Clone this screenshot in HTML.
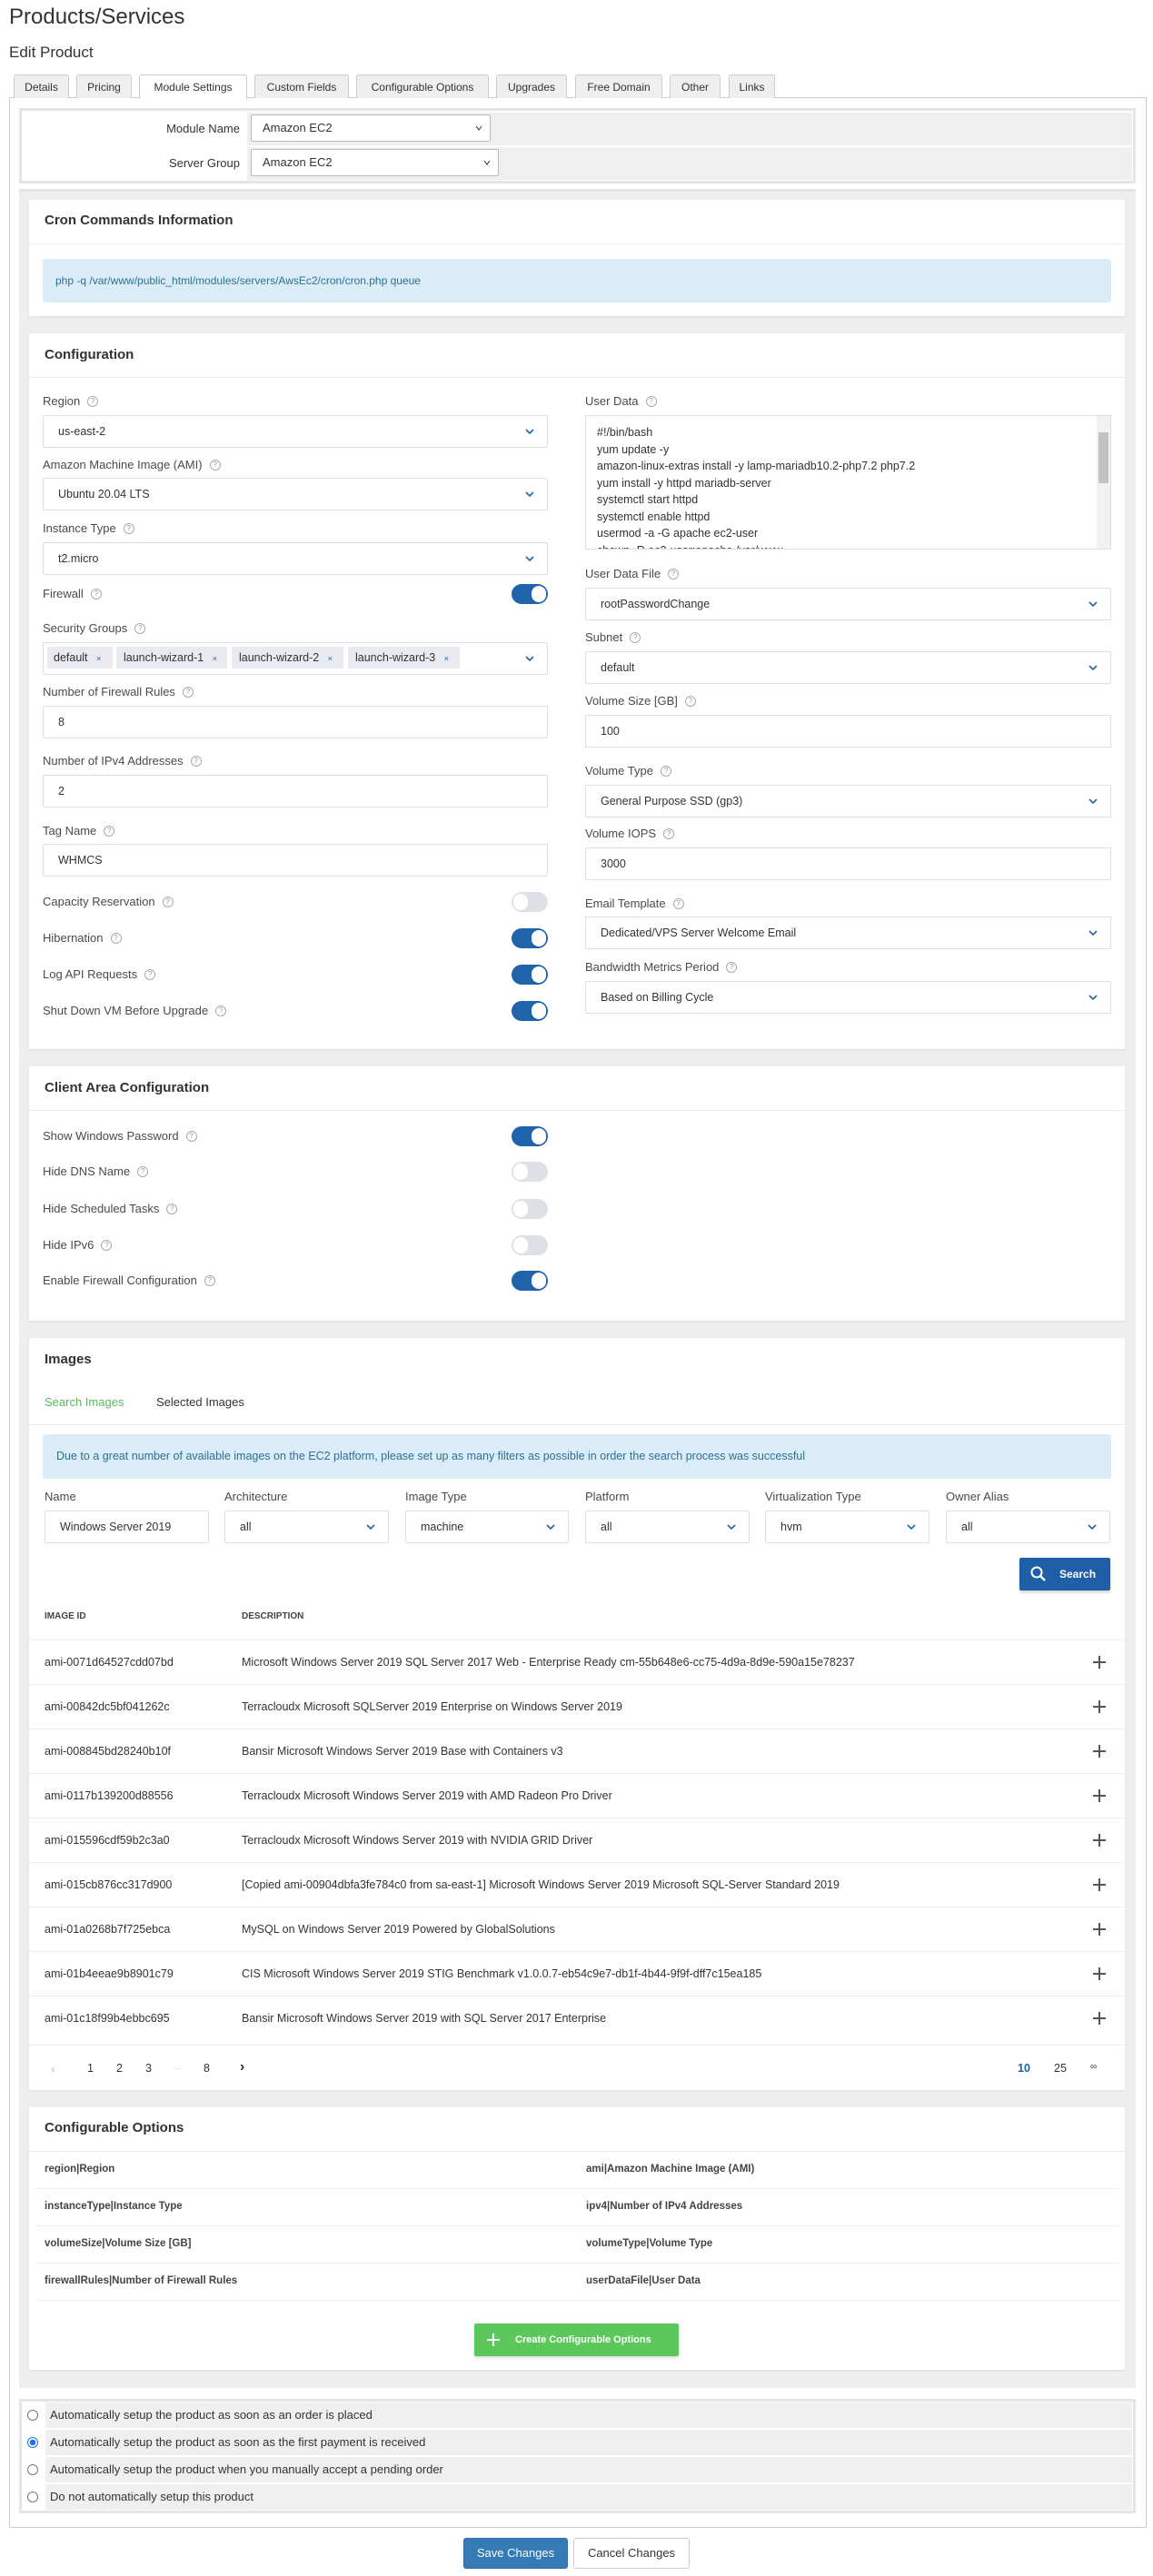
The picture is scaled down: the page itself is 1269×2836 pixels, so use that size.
<!DOCTYPE html>
<html><head><meta charset="utf-8">
<style>
*{box-sizing:border-box}
body{margin:0;width:1269px;height:2836px;position:relative;background:#fff;font-family:"Liberation Sans",Arial,sans-serif;color:#333;overflow:hidden}
.a{position:absolute}
.lbl{position:absolute;font-size:13px;color:#4a4a4a;height:16px;line-height:16px;white-space:nowrap}
.q{display:inline-block;width:12px;height:12px;border:1px solid #aaa;border-radius:50%;font-size:8px;line-height:10px;text-align:center;color:#999;margin-left:8px;vertical-align:middle;position:relative;top:-1px}
.sel{position:absolute;border:1px solid #dcdfe6;background:#fff;height:36px;font-size:12.5px;padding-left:16px;line-height:34px;color:#333;border-radius:2px}
.sel svg{position:absolute;right:14px;top:14px}
.tg{position:absolute;width:40px;height:22px;border-radius:11px;background:#1f63ab}
.tg:after{content:"";position:absolute;right:2px;top:2px;width:16px;height:18px;border-radius:9px;background:#fff}
.tg.off{background:#dde0e7}
.tg.off:after{left:2px;right:auto}
.card{position:absolute;left:32px;width:1206px;background:#fff;box-shadow:0 1px 2px rgba(0,0,0,.08)}
.ch{position:absolute;left:17px;font-size:15px;color:#333;font-weight:bold}
.hl{position:absolute;left:0;right:0;height:1px;background:#e9ecf0}
.tab{position:absolute;top:82px;height:26px;border:1px solid #ccc;border-bottom:none;background:#efefef;font-size:12px;line-height:26px;text-align:center;color:#333;border-radius:3px 3px 0 0}
.row{position:absolute;font-size:12.5px;color:#333;white-space:nowrap}
.plus{position:absolute;left:1203px;width:14px;height:14px}
.plus:before{content:"";position:absolute;left:6px;top:0;width:2px;height:14px;background:#555}
.plus:after{content:"";position:absolute;left:0;top:6px;width:14px;height:2px;background:#555}
.rl{position:absolute;left:0;right:0;height:1px;background:#eceef2}
.co{position:absolute;font-size:11.5px;font-weight:bold;color:#444}
.rad{position:absolute;left:30px;width:12px;height:12px;border:1px solid #777;border-radius:50%;background:#fff}
.rrow{position:absolute;left:50px;width:1196px;height:28px;background:#efefef;font-size:13px;line-height:28px;padding-left:5px;color:#333}
</style></head><body>
<div class="a" style="left:10px;top:4px;font-size:24px;color:#333;line-height:30px">Products/Services</div>
<div class="a" style="left:10px;top:46px;font-size:17px;color:#333;line-height:24px">Edit Product</div>

<div class="a" style="left:10px;top:107px;width:1252px;height:2676px;border:1px solid #ccc;background:#fff"></div>
<div class="tab" style="left:15px;width:61px">Details</div>
<div class="tab" style="left:84px;width:61px">Pricing</div>
<div class="tab" style="left:153px;width:119px;background:#fff;height:27px">Module Settings</div>
<div class="tab" style="left:280px;width:104px">Custom Fields</div>
<div class="tab" style="left:392px;width:146px">Configurable Options</div>
<div class="tab" style="left:546px;width:78px">Upgrades</div>
<div class="tab" style="left:633px;width:96px">Free Domain</div>
<div class="tab" style="left:737px;width:56px">Other</div>
<div class="tab" style="left:802px;width:51px">Links</div>

<div class="a" style="left:21px;top:119px;width:1229px;height:83px;border:3px solid #e3e5e8;background:#fff"></div>
<div class="a" style="left:272px;top:124px;width:974px;height:36px;background:#efefef"></div>
<div class="a" style="left:272px;top:162px;width:974px;height:36px;background:#efefef"></div>
<div class="lbl" style="left:160px;width:104px;text-align:right;top:134px;font-size:13px;color:#333">Module Name</div>
<div class="lbl" style="left:160px;width:104px;text-align:right;top:172px;font-size:13px;color:#333">Server Group</div>
<div class="sel" style="left:276px;top:126px;width:264px;height:30px;line-height:28px;font-size:13px;padding-left:12px;border-color:#bbb">Amazon EC2<svg width="8" height="6" style="top:11px;right:8px"><path d="M1 1l3 4 3-4" stroke="#333" fill="none"/></svg></div>
<div class="sel" style="left:276px;top:164px;width:273px;height:30px;line-height:28px;font-size:13px;padding-left:12px;border-color:#bbb">Amazon EC2<svg width="8" height="6" style="top:11px;right:8px"><path d="M1 1l3 4 3-4" stroke="#333" fill="none"/></svg></div>

<div class="a" style="left:21px;top:208px;width:1229px;height:2421px;background:#eeeeee;border-top:3px solid #e3e5e8"></div>

<div class="card" style="top:220px;height:128px">
 <div class="ch" style="top:14px">Cron Commands Information</div>
 <div class="hl" style="top:48px"></div>
 <div class="a" style="left:15px;top:65px;width:1176px;height:48px;background:#d9ecf7;border-radius:3px;font-size:12px;color:#31708f;line-height:48px;padding-left:14px">php -q /var/www/public_html/modules/servers/AwsEc2/cron/cron.php queue</div>
</div>

<div class="card" style="top:367px;height:788px"><div class="ch" style="top:15px">Configuration</div><div class="hl" style="top:48px"></div></div>

<div class="lbl" style="left:47px;top:434px">Region<span class="q">?</span></div>
<div class="sel" style="left:47px;top:457px;width:556px">us-east-2<svg width="10" height="7"><path d="M1 1l4 4 4-4" stroke="#1f63ab" stroke-width="1.6" fill="none"/></svg></div>
<div class="lbl" style="left:47px;top:504px">Amazon Machine Image (AMI)<span class="q">?</span></div>
<div class="sel" style="left:47px;top:526px;width:556px">Ubuntu 20.04 LTS<svg width="10" height="7"><path d="M1 1l4 4 4-4" stroke="#1f63ab" stroke-width="1.6" fill="none"/></svg></div>
<div class="lbl" style="left:47px;top:574px">Instance Type<span class="q">?</span></div>
<div class="sel" style="left:47px;top:597px;width:556px">t2.micro<svg width="10" height="7"><path d="M1 1l4 4 4-4" stroke="#1f63ab" stroke-width="1.6" fill="none"/></svg></div>
<div class="lbl" style="left:47px;top:646px">Firewall<span class="q">?</span></div>
<div class="tg" style="left:563px;top:643px"></div>
<div class="lbl" style="left:47px;top:684px">Security Groups<span class="q">?</span></div>
<div class="sel" style="left:47px;top:707px;width:556px"><svg width="10" height="7"><path d="M1 1l4 4 4-4" stroke="#1f63ab" stroke-width="1.6" fill="none"/></svg></div>
<div class="a" style="left:52px;top:712px;width:72px;height:24px;background:#e8eaef;font-size:12.5px;line-height:24px;padding-left:7px">default <span style="font-size:9px;margin-left:6px;color:#1f63ab">×</span></div>
<div class="a" style="left:128px;top:712px;width:122px;height:24px;background:#e8eaef;font-size:12.5px;line-height:24px;padding-left:8px">launch-wizard-1 <span style="font-size:9px;margin-left:6px;color:#1f63ab">×</span></div>
<div class="a" style="left:255px;top:712px;width:123px;height:24px;background:#e8eaef;font-size:12.5px;line-height:24px;padding-left:8px">launch-wizard-2 <span style="font-size:9px;margin-left:6px;color:#1f63ab">×</span></div>
<div class="a" style="left:383px;top:712px;width:123px;height:24px;background:#e8eaef;font-size:12.5px;line-height:24px;padding-left:8px">launch-wizard-3 <span style="font-size:9px;margin-left:6px;color:#1f63ab">×</span></div>
<div class="lbl" style="left:47px;top:754px">Number of Firewall Rules<span class="q">?</span></div>
<div class="sel" style="left:47px;top:777px;width:556px">8</div>
<div class="lbl" style="left:47px;top:830px">Number of IPv4 Addresses<span class="q">?</span></div>
<div class="sel" style="left:47px;top:853px;width:556px">2</div>
<div class="lbl" style="left:47px;top:907px">Tag Name<span class="q">?</span></div>
<div class="sel" style="left:47px;top:929px;width:556px">WHMCS</div>
<div class="lbl" style="left:47px;top:985px">Capacity Reservation<span class="q">?</span></div>
<div class="tg off" style="left:563px;top:982px"></div>
<div class="lbl" style="left:47px;top:1025px">Hibernation<span class="q">?</span></div>
<div class="tg" style="left:563px;top:1022px"></div>
<div class="lbl" style="left:47px;top:1065px">Log API Requests<span class="q">?</span></div>
<div class="tg" style="left:563px;top:1062px"></div>
<div class="lbl" style="left:47px;top:1105px">Shut Down VM Before Upgrade<span class="q">?</span></div>
<div class="tg" style="left:563px;top:1102px"></div>

<div class="lbl" style="left:644px;top:434px">User Data<span class="q">?</span></div>
<div class="a" style="left:644px;top:457px;width:579px;height:148px;border:1px solid #dcdfe6;overflow:hidden;font-size:12.5px;line-height:18.5px;padding:9px 0 0 12px;color:#333">#!/bin/bash<br>yum update -y<br>amazon-linux-extras install -y lamp-mariadb10.2-php7.2 php7.2<br>yum install -y httpd mariadb-server<br>systemctl start httpd<br>systemctl enable httpd<br>usermod -a -G apache ec2-user<br>chown -R ec2-user:apache /var/www
 <div class="a" style="right:0;top:0;width:15px;height:146px;background:#f1f1f1"></div>
 <div class="a" style="right:2px;top:18px;width:11px;height:56px;background:#c1c1c1"></div>
</div>
<div class="lbl" style="left:644px;top:624px">User Data File<span class="q">?</span></div>
<div class="sel" style="left:644px;top:647px;width:579px">rootPasswordChange<svg width="10" height="7"><path d="M1 1l4 4 4-4" stroke="#1f63ab" stroke-width="1.6" fill="none"/></svg></div>
<div class="lbl" style="left:644px;top:694px">Subnet<span class="q">?</span></div>
<div class="sel" style="left:644px;top:717px;width:579px">default<svg width="10" height="7"><path d="M1 1l4 4 4-4" stroke="#1f63ab" stroke-width="1.6" fill="none"/></svg></div>
<div class="lbl" style="left:644px;top:764px">Volume Size [GB]<span class="q">?</span></div>
<div class="sel" style="left:644px;top:787px;width:579px">100</div>
<div class="lbl" style="left:644px;top:841px">Volume Type<span class="q">?</span></div>
<div class="sel" style="left:644px;top:864px;width:579px">General Purpose SSD (gp3)<svg width="10" height="7"><path d="M1 1l4 4 4-4" stroke="#1f63ab" stroke-width="1.6" fill="none"/></svg></div>
<div class="lbl" style="left:644px;top:910px">Volume IOPS<span class="q">?</span></div>
<div class="sel" style="left:644px;top:933px;width:579px">3000</div>
<div class="lbl" style="left:644px;top:987px">Email Template<span class="q">?</span></div>
<div class="sel" style="left:644px;top:1009px;width:579px">Dedicated/VPS Server Welcome Email<svg width="10" height="7"><path d="M1 1l4 4 4-4" stroke="#1f63ab" stroke-width="1.6" fill="none"/></svg></div>
<div class="lbl" style="left:644px;top:1057px">Bandwidth Metrics Period<span class="q">?</span></div>
<div class="sel" style="left:644px;top:1080px;width:579px">Based on Billing Cycle<svg width="10" height="7"><path d="M1 1l4 4 4-4" stroke="#1f63ab" stroke-width="1.6" fill="none"/></svg></div>

<div class="card" style="top:1174px;height:280px"><div class="ch" style="top:15px">Client Area Configuration</div><div class="hl" style="top:48px"></div></div>
<div class="lbl" style="left:47px;top:1243px">Show Windows Password<span class="q">?</span></div>
<div class="tg" style="left:563px;top:1240px"></div>
<div class="lbl" style="left:47px;top:1282px">Hide DNS Name<span class="q">?</span></div>
<div class="tg off" style="left:563px;top:1279px"></div>
<div class="lbl" style="left:47px;top:1323px">Hide Scheduled Tasks<span class="q">?</span></div>
<div class="tg off" style="left:563px;top:1320px"></div>
<div class="lbl" style="left:47px;top:1363px">Hide IPv6<span class="q">?</span></div>
<div class="tg off" style="left:563px;top:1360px"></div>
<div class="lbl" style="left:47px;top:1402px">Enable Firewall Configuration<span class="q">?</span></div>
<div class="tg" style="left:563px;top:1399px"></div>

<div class="card" style="top:1473px;height:828px">
 <div class="ch" style="top:15px">Images</div>
 <div class="a" style="left:17px;top:63px;font-size:13px;color:#5cb85c">Search Images</div>
 <div class="a" style="left:140px;top:63px;font-size:13px;color:#333">Selected Images</div>
 <div class="hl" style="top:95px"></div>
 <div class="a" style="left:15px;top:106px;width:1176px;height:49px;background:#d9ecf7;border-radius:3px;font-size:12.5px;color:#31708f;line-height:49px;padding-left:15px">Due to a great number of available images on the EC2 platform, please set up as many filters as possible in order the search process was successful</div>
</div>
<div class="lbl" style="left:49px;top:1640px">Name</div>
<div class="lbl" style="left:247px;top:1640px">Architecture</div>
<div class="lbl" style="left:446px;top:1640px">Image Type</div>
<div class="lbl" style="left:644px;top:1640px">Platform</div>
<div class="lbl" style="left:842px;top:1640px">Virtualization Type</div>
<div class="lbl" style="left:1041px;top:1640px">Owner Alias</div>
<div class="sel" style="left:49px;top:1663px;width:181px">Windows Server 2019</div>
<div class="sel" style="left:247px;top:1663px;width:181px">all<svg width="10" height="7"><path d="M1 1l4 4 4-4" stroke="#1f63ab" stroke-width="1.6" fill="none"/></svg></div>
<div class="sel" style="left:446px;top:1663px;width:180px">machine<svg width="10" height="7"><path d="M1 1l4 4 4-4" stroke="#1f63ab" stroke-width="1.6" fill="none"/></svg></div>
<div class="sel" style="left:644px;top:1663px;width:181px">all<svg width="10" height="7"><path d="M1 1l4 4 4-4" stroke="#1f63ab" stroke-width="1.6" fill="none"/></svg></div>
<div class="sel" style="left:842px;top:1663px;width:181px">hvm<svg width="10" height="7"><path d="M1 1l4 4 4-4" stroke="#1f63ab" stroke-width="1.6" fill="none"/></svg></div>
<div class="sel" style="left:1041px;top:1663px;width:181px">all<svg width="10" height="7"><path d="M1 1l4 4 4-4" stroke="#1f63ab" stroke-width="1.6" fill="none"/></svg></div>
<div class="a" style="left:1122px;top:1715px;width:100px;height:36px;background:#1f5fa8;border-radius:2px;color:#fff;font-size:12px;font-weight:bold;line-height:36px;padding-left:44px;box-shadow:0 2px 3px rgba(0,0,0,.2)">Search<svg class="a" style="left:12px;top:9px" width="18" height="18"><circle cx="7" cy="7" r="5.5" stroke="#fff" stroke-width="2" fill="none"/><path d="M11 11l5 5" stroke="#fff" stroke-width="2.4"/></svg></div>

<div class="a" style="left:49px;top:1774px;font-size:10px;font-weight:bold;color:#444">IMAGE ID</div>
<div class="a" style="left:266px;top:1774px;font-size:10px;font-weight:bold;color:#444">DESCRIPTION</div>
<div class="a" style="left:32px;top:1805px;width:1206px;height:1px;background:#eceef2"></div>
<div class="a" style="left:32px;top:1805px;width:1206px;height:447px">
 <div class="rl" style="top:49px"></div><div class="rl" style="top:98px"></div><div class="rl" style="top:147px"></div><div class="rl" style="top:196px"></div><div class="rl" style="top:245px"></div><div class="rl" style="top:294px"></div><div class="rl" style="top:343px"></div><div class="rl" style="top:392px"></div><div class="rl" style="top:446px"></div>
</div>
<div class="row" style="left:49px;top:1823px">ami-0071d64527cdd07bd</div><div class="row" style="left:266px;top:1823px">Microsoft Windows Server 2019 SQL Server 2017 Web - Enterprise Ready cm-55b648e6-cc75-4d9a-8d9e-590a15e78237</div><div class="plus" style="top:1823px"></div>
<div class="row" style="left:49px;top:1872px">ami-00842dc5bf041262c</div><div class="row" style="left:266px;top:1872px">Terracloudx Microsoft SQLServer 2019 Enterprise on Windows Server 2019</div><div class="plus" style="top:1872px"></div>
<div class="row" style="left:49px;top:1921px">ami-008845bd28240b10f</div><div class="row" style="left:266px;top:1921px">Bansir Microsoft Windows Server 2019 Base with Containers v3</div><div class="plus" style="top:1921px"></div>
<div class="row" style="left:49px;top:1970px">ami-0117b139200d88556</div><div class="row" style="left:266px;top:1970px">Terracloudx Microsoft Windows Server 2019 with AMD Radeon Pro Driver</div><div class="plus" style="top:1970px"></div>
<div class="row" style="left:49px;top:2019px">ami-015596cdf59b2c3a0</div><div class="row" style="left:266px;top:2019px">Terracloudx Microsoft Windows Server 2019 with NVIDIA GRID Driver</div><div class="plus" style="top:2019px"></div>
<div class="row" style="left:49px;top:2068px">ami-015cb876cc317d900</div><div class="row" style="left:266px;top:2068px">[Copied ami-00904dbfa3fe784c0 from sa-east-1] Microsoft Windows Server 2019 Microsoft SQL-Server Standard 2019</div><div class="plus" style="top:2068px"></div>
<div class="row" style="left:49px;top:2117px">ami-01a0268b7f725ebca</div><div class="row" style="left:266px;top:2117px">MySQL on Windows Server 2019 Powered by GlobalSolutions</div><div class="plus" style="top:2117px"></div>
<div class="row" style="left:49px;top:2166px">ami-01b4eeae9b8901c79</div><div class="row" style="left:266px;top:2166px">CIS Microsoft Windows Server 2019 STIG Benchmark v1.0.0.7-eb54c9e7-db1f-4b44-9f9f-dff7c15ea185</div><div class="plus" style="top:2166px"></div>
<div class="row" style="left:49px;top:2215px">ami-01c18f99b4ebbc695</div><div class="row" style="left:266px;top:2215px">Bansir Microsoft Windows Server 2019 with SQL Server 2017 Enterprise</div><div class="plus" style="top:2215px"></div>

<div class="row" style="left:56px;top:2269px;color:#bbb;font-size:14px">&#8249;</div>
<div class="row" style="left:96px;top:2270px">1</div>
<div class="row" style="left:128px;top:2270px">2</div>
<div class="row" style="left:160px;top:2270px">3</div>
<div class="row" style="left:192px;top:2270px;color:#bbb;font-size:9px">...</div>
<div class="row" style="left:224px;top:2270px">8</div>
<div class="row" style="left:264px;top:2267px;font-size:16px;font-weight:bold">&#8250;</div>
<div class="row" style="left:1120px;top:2270px;color:#1f5fa8;font-weight:bold">10</div>
<div class="row" style="left:1160px;top:2270px">25</div>
<div class="row" style="left:1200px;top:2270px;font-size:10px">∞</div>

<div class="card" style="top:2320px;height:289px">
 <div class="ch" style="top:14px">Configurable Options</div>
 <div class="hl" style="top:48px"></div>
 <div class="a" style="left:7px;right:7px;top:89px;height:1px;background:#eceef2"></div>
 <div class="a" style="left:7px;right:7px;top:130px;height:1px;background:#eceef2"></div>
 <div class="a" style="left:7px;right:7px;top:171px;height:1px;background:#eceef2"></div>
 <div class="a" style="left:7px;right:7px;top:212px;height:1px;background:#eceef2"></div>
</div>
<div class="co" style="left:49px;top:2382px">region|Region</div><div class="co" style="left:645px;top:2382px">ami|Amazon Machine Image (AMI)</div>
<div class="co" style="left:49px;top:2423px">instanceType|Instance Type</div><div class="co" style="left:645px;top:2423px">ipv4|Number of IPv4 Addresses</div>
<div class="co" style="left:49px;top:2464px">volumeSize|Volume Size [GB]</div><div class="co" style="left:645px;top:2464px">volumeType|Volume Type</div>
<div class="co" style="left:49px;top:2505px">firewallRules|Number of Firewall Rules</div><div class="co" style="left:645px;top:2505px">userDataFile|User Data</div>
<div class="a" style="left:522px;top:2558px;width:225px;height:36px;background:#5cc85c;border-radius:2px;color:#fff;font-size:11px;font-weight:bold;line-height:36px;padding-left:45px;box-shadow:0 2px 3px rgba(0,0,0,.15)">Create Configurable Options<svg class="a" style="left:14px;top:11px" width="14" height="14"><path d="M7 0v14M0 7h14" stroke="#fff" stroke-width="2"/></svg></div>

<div class="a" style="left:21px;top:2641px;width:1229px;height:126px;border:3px solid #e3e5e8;background:#fff"></div>
<div class="rrow" style="top:2645px">Automatically setup the product as soon as an order is placed</div>
<div class="rrow" style="top:2675px">Automatically setup the product as soon as the first payment is received</div>
<div class="rrow" style="top:2705px">Automatically setup the product when you manually accept a pending order</div>
<div class="rrow" style="top:2735px">Do not automatically setup this product</div>
<div class="rad" style="top:2653px"></div>
<div class="rad" style="top:2683px;border-color:#1a73e8;background:radial-gradient(circle,#1a73e8 3px,#fff 3.5px)"></div>
<div class="rad" style="top:2713px"></div>
<div class="rad" style="top:2743px"></div>

<div class="a" style="left:510px;top:2794px;width:115px;height:34px;background:#337ab7;border:1px solid #2e6da4;border-radius:3px;color:#fff;font-size:13px;line-height:32px;text-align:center">Save Changes</div>
<div class="a" style="left:631px;top:2794px;width:128px;height:34px;background:#fff;border:1px solid #ccc;border-radius:3px;color:#333;font-size:13px;line-height:32px;text-align:center">Cancel Changes</div>
</body></html>
